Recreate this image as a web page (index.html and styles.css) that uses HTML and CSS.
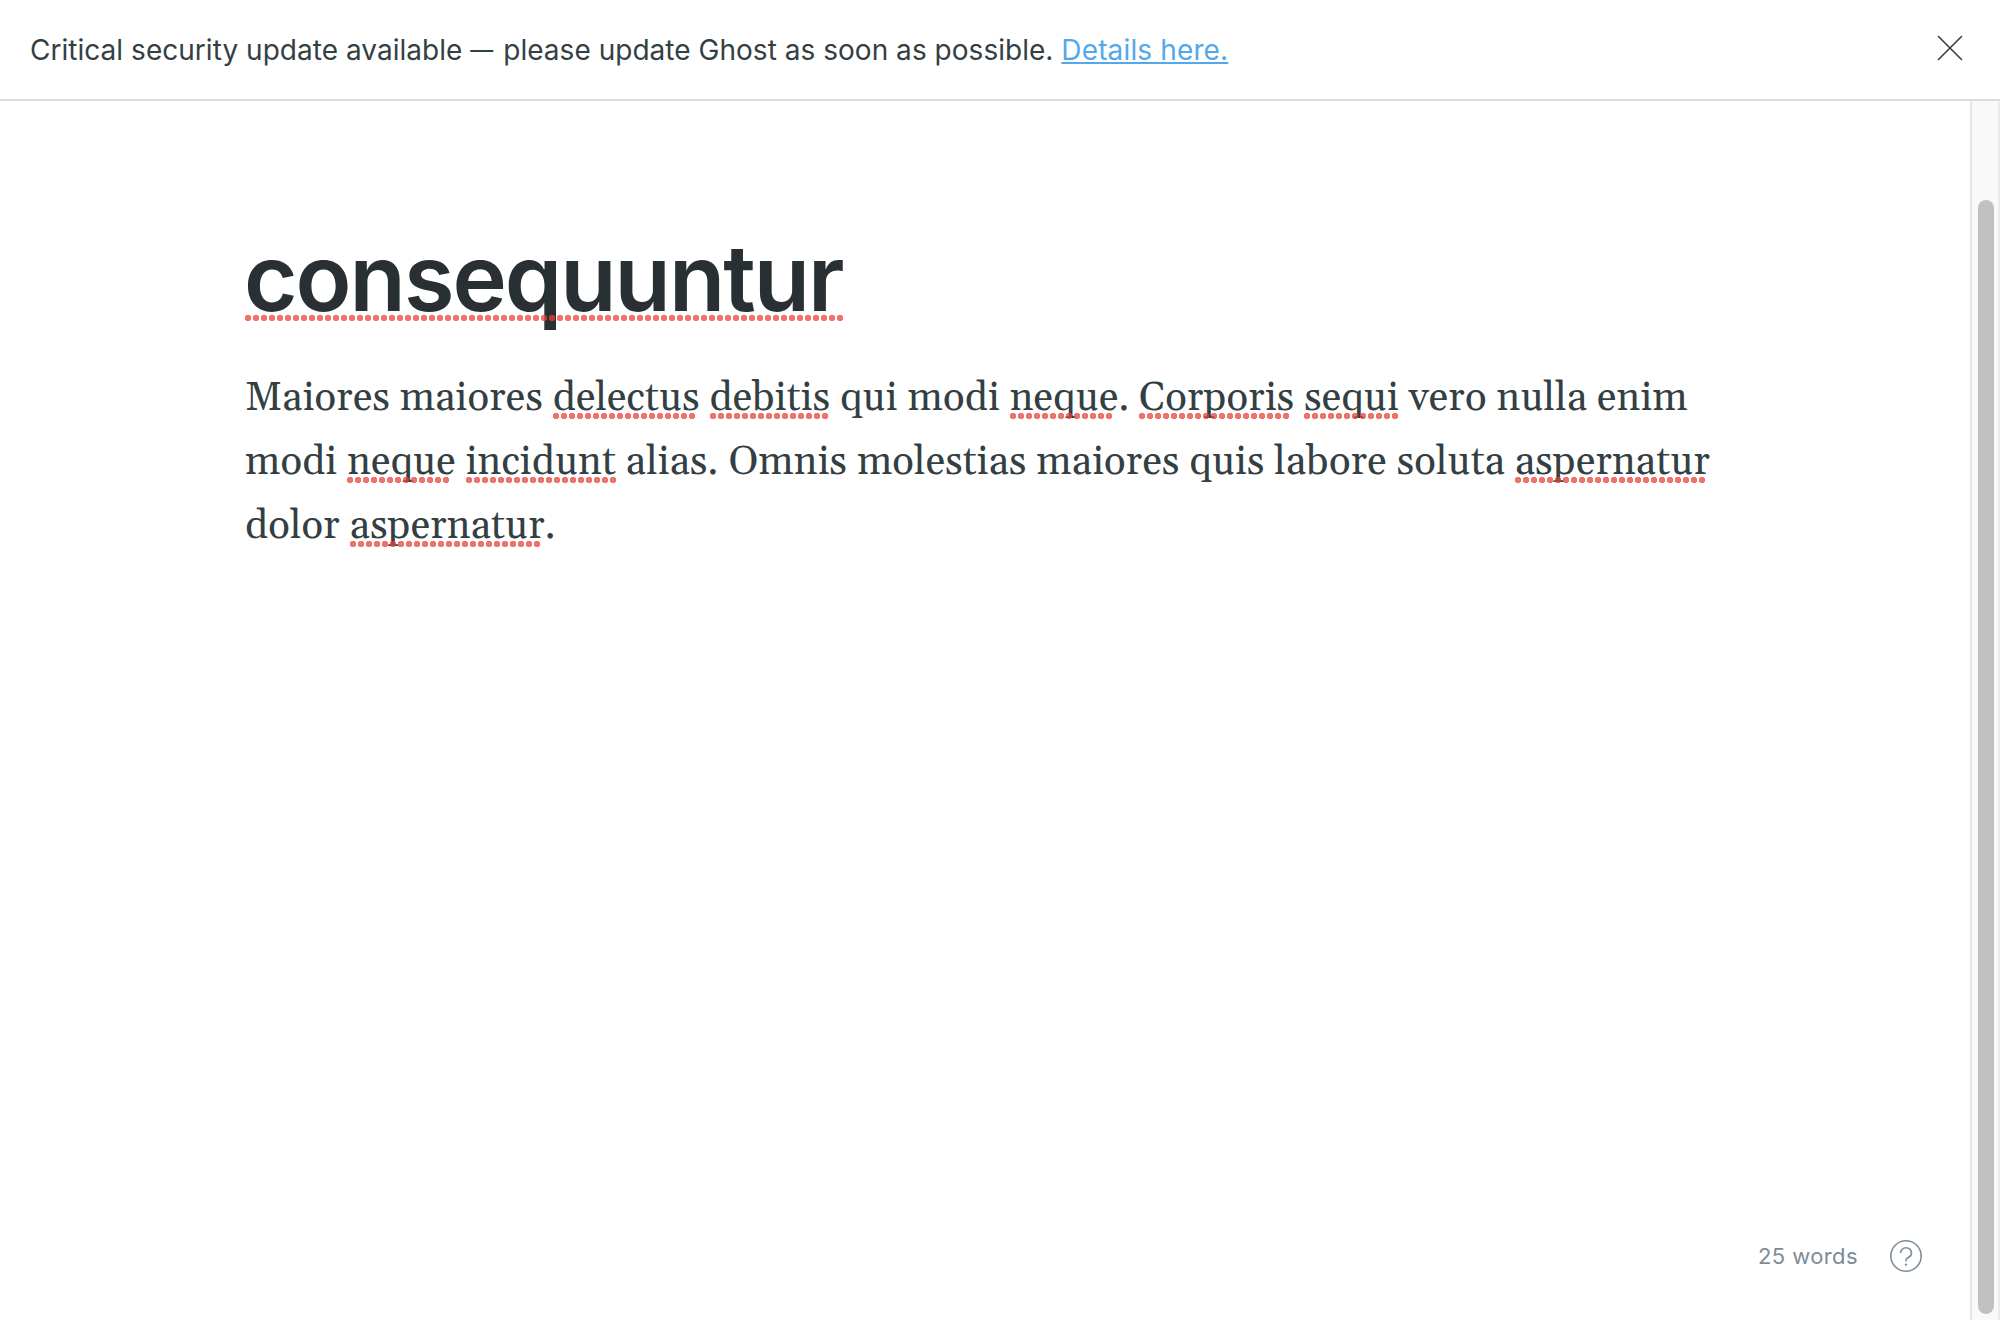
FILE: index.html
```
<!DOCTYPE html>
<html lang="en">
<head>
<meta charset="utf-8">
<title>Editor</title>
<link rel="stylesheet" href="styles.css">
</head>
<body>
<div class="app">
  <header class="alert">
    <p class="alert-text">Critical security update available <span class="dash">—</span> please update Ghost as soon as possible. <a class="alert-link" href="#">Details here.</a></p>
    <button class="alert-close" aria-label="Close">
      <svg width="26" height="26" viewBox="0 0 26 26"><path d="M1.5 1.5 24.5 24.5M24.5 1.5 1.5 24.5"/></svg>
    </button>
  </header>
  <div class="workspace">
    <main class="editor">
      <article class="post">
        <h1 class="title"><span class="misspelled">consequuntur</span></h1>
        <p class="body">Maiores maiores <span class="misspelled">delectus</span> <span class="misspelled">debitis</span> qui modi <span class="misspelled">neque</span>. <span class="misspelled">Corporis</span> <span class="misspelled">sequi</span> vero nulla enim modi <span class="misspelled">neque</span> <span class="misspelled">incidunt</span> alias. Omnis molestias maiores quis labore soluta <span class="misspelled">aspernatur</span> dolor <span class="misspelled">aspernatur</span>.</p>
      </article>
      <footer class="status">
        <span class="word-count">25 words</span>
        <svg class="help" width="32" height="32" viewBox="0 0 32 32">
          <circle cx="16" cy="16" r="15.2"/>
          <path d="M10.6 13a5.4 5.4 0 0 1 5.4-5.3c3 0 5.5 2.2 5.5 5.2 0 3.6-2.6 4.4-4 5.1-1.1.6-1.5 1.2-1.5 2.3v1.2"/>
          <circle class="help-dot" cx="16" cy="24.6" r="1.2"/>
        </svg>
      </footer>
    </main>
    <div class="scrollbar"><div class="scrollbar-thumb"></div></div>
  </div>
</div>
</body>
</html>
```

FILE: styles.css
```
* { box-sizing: border-box; }

body {
  margin: 0;
  background: #fff;
  color: #343f44;
  font-family: Inter, "Liberation Sans", sans-serif;
}

.app {
  display: flex;
  flex-direction: column;
  height: 1320px;
  overflow: hidden;
}

.alert {
  display: flex;
  align-items: center;
  justify-content: space-between;
  flex: none;
  height: 101px;
  padding: 0 37px 3px 30px;
  border-bottom: 2px solid #dbdddd;
}

.alert-text {
  margin: 4px 0 0;
  font-size: 28px;
  line-height: 40px;
  letter-spacing: 0.03px;
}

.dash {
  font-size: 23px;
  line-height: 1;
  letter-spacing: 2px;
  vertical-align: 2px;
}

.alert-link {
  color: #54a8ea;
  letter-spacing: 0.14px;
  text-decoration: underline;
  text-decoration-thickness: 2px;
  text-decoration-skip-ink: none;
  text-underline-offset: 2px;
}

.alert-close {
  display: flex;
  padding: 0;
  border: 0;
  background: none;
}

.alert-close path {
  fill: none;
  stroke: #343f44;
  stroke-width: 1.6;
  stroke-linecap: round;
}

.workspace {
  display: flex;
  flex: 1;
  min-height: 0;
}

.editor {
  display: flex;
  flex: 1;
  flex-direction: column;
  justify-content: space-between;
}

.post {
  width: 1480px;
  margin-left: 245px;
  padding-top: 121px;
}

.title {
  margin: 0 0 33px;
  color: #283033;
  font-size: 92px;
  font-weight: 600;
  line-height: 112px;
  letter-spacing: -2px;
  text-indent: -1px;
}

.body {
  margin: 0;
  font-family: Gelasio, Georgia, "Liberation Serif", serif;
  font-size: 40px;
  line-height: 64px;
  letter-spacing: 0.2px;
}

.misspelled {
  position: relative;
}

/* Spell-check dots, drawn over the descenders */
.misspelled::after {
  position: absolute;
  top: 40px;
  left: 0;
  width: round(down, 100% + 2px, 8px);
  height: 6px;
  background: radial-gradient(circle at 3px 3px, rgba(234, 64, 53, 0.74) 2.9px, transparent 3.4px) 0 0 / 8px 6px repeat-x;
  content: "";
}

.title .misspelled::after {
  top: 93px;
  left: 1px;
  width: 600px;
}

.status {
  display: flex;
  align-items: center;
  justify-content: flex-end;
  gap: 32px;
  padding: 0 48px 48px 0;
  color: #7c8d98;
}

.word-count {
  font-size: 22px;
  line-height: 32px;
  letter-spacing: 0.4px;
}

.help {
  fill: none;
  stroke: #7c8d98;
  stroke-width: 1.6;
}

.help-dot {
  fill: #7c8d98;
  stroke: none;
}

.scrollbar {
  flex: none;
  width: 30px;
  padding: 99px 4px 6px 6px;
  border-right: 2px solid #eaeaea;
  border-left: 2px solid #e5e5e5;
  background: #f9f9f9;
}

.scrollbar-thumb {
  height: 100%;
  border-radius: 8px;
  background: #c1c1c1;
}
```
